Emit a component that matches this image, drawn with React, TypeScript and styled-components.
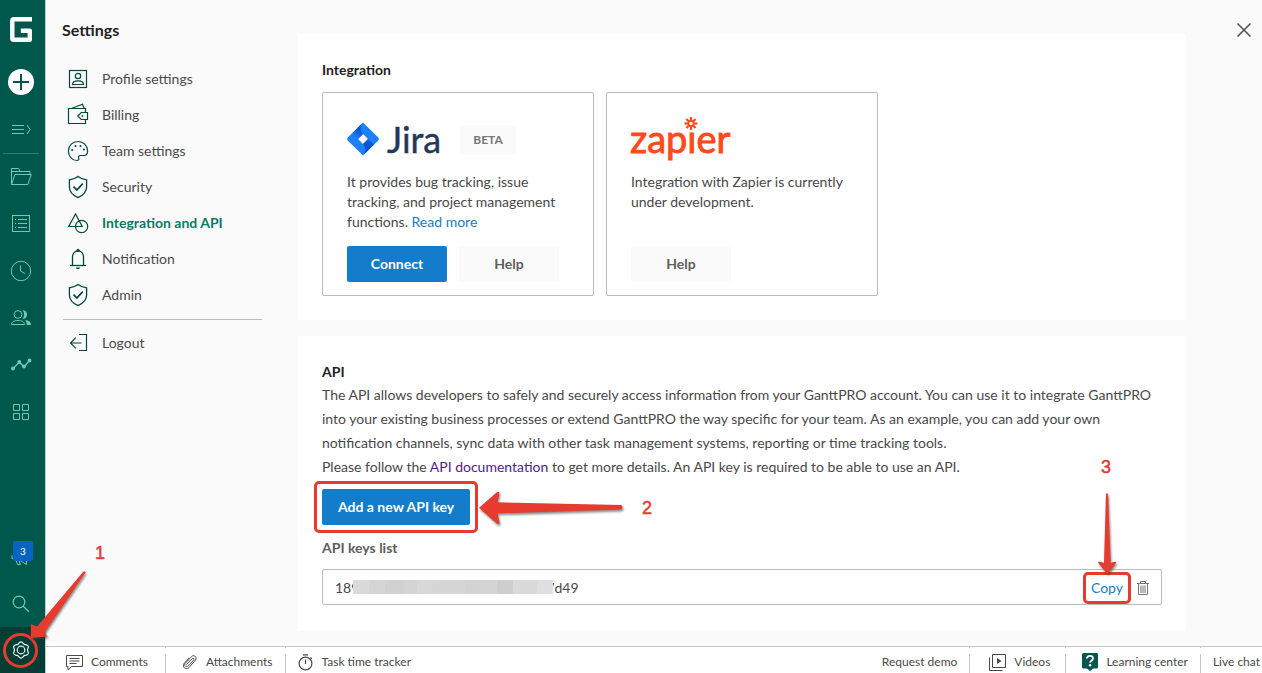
import React from "react";
import styled, { createGlobalStyle, css } from "styled-components";

const GlobalStyle = createGlobalStyle`
  *, *::before, *::after { box-sizing: border-box; }
  body {
    margin: 0;
    background: #fff;
    color: #484848;
    font-family: Lato, "Open Sans", sans-serif;
    font-size: 14px;
    line-height: 20px;
    overflow-x: hidden;
  }
  button { font: inherit; border: 0; padding: 0; margin: 0; cursor: pointer; background: none; color: inherit; }
  a { text-decoration: none; color: inherit; }
  h1, h2, h3, p, ul { margin: 0; padding: 0; }
  li { list-style: none; }
  svg { display: block; flex: none; overflow: visible; }
`;

const Page = styled.div`
  display: flex;
  min-height: 100vh;
`;

/* ---------- Left rail ---------- */

const Rail = styled.nav`
  display: flex;
  flex-direction: column;
  flex: none;
  width: 46px;
  padding: 6px 3px 0 0;
  background: #00574b;
  border-right: 1px solid #b9cfcb;
  color: #70c9b6;
`;

const RailItem = styled.button<{ $divided?: boolean; $first?: boolean }>`
  position: relative;
  display: flex;
  align-items: center;
  justify-content: center;
  flex: none;
  width: 42px;
  height: 47px;
  ${(p) => p.$first && css`margin: 5px 0 1px;`}
  ${(p) =>
    p.$divided &&
    css`
      &::before {
        content: "";
        position: absolute;
        top: 0;
        left: 3px;
        right: 3px;
        height: 1px;
        background: #35796f;
      }
    `}
`;

const RailLogo = styled.a`
  display: flex;
  align-items: center;
  justify-content: center;
  width: 42px;
  height: 47px;
  color: #fff;
`;

const RailSpacer = styled.div`
  flex: 1;
`;

const Badge = styled.span`
  position: absolute;
  top: 8px;
  left: 13px;
  width: 20px;
  height: 20px;
  border-radius: 2px;
  background: #0864c0;
  color: #fff;
  font-size: 10px;
  line-height: 20px;
  text-align: center;
`;

const ActiveRailItem = styled(RailItem)`
  width: 45px;
  height: 46px;
  padding-right: 3px;
  background: #033d34;
  color: #e8f5f2;
`;

/* ---------- Main area ---------- */

const Main = styled.div`
  display: flex;
  flex-direction: column;
  flex: 1;
  min-width: 0;
`;

const Content = styled.div`
  display: flex;
  flex: 1;
  background: #fafafa;
`;

const Menu = styled.nav`
  flex: none;
  width: 252px;
  padding: 18px 36px 0 16px;
`;

const MenuTitle = styled.h1`
  margin-bottom: 19px;
  color: #222;
  font-size: 16px;
  line-height: 24px;
  font-weight: 700;
`;

const MenuLink = styled.a<{ $active?: boolean }>`
  display: flex;
  align-items: center;
  gap: 12px;
  height: 36px;
  padding-left: 4px;
  color: ${(p) => (p.$active ? "#0a7a67" : "#4a4a4a")};
  font-weight: ${(p) => (p.$active ? 700 : 400)};
  svg { color: #00473d; }
`;

const MenuDivider = styled.hr`
  height: 1px;
  margin: 6px 0 5px 1px;
  border: 0;
  background: #bdbdbd;
`;

const Sections = styled.main`
  display: flex;
  flex-direction: column;
  gap: 16px;
  flex: 1;
  min-width: 0;
  padding: 34px 0 12px;
`;

const Aside = styled.div`
  flex: none;
  width: 76px;
  padding: 20px 8px 0 0;
  display: flex;
  justify-content: flex-end;
  align-items: flex-start;
`;

const CloseButton = styled.button`
  display: flex;
  align-items: center;
  justify-content: center;
  width: 20px;
  height: 20px;
  color: #555;
`;

const Section = styled.section`
  padding: 24px 24px;
  background: #fff;
`;

const ApiPanel = styled(Section)`
  padding-bottom: 26px;
`;

const SectionTitle = styled.h2`
  color: #222;
  font-size: 14px;
  line-height: 24px;
  font-weight: 700;
`;

const Cards = styled.div`
  display: flex;
  flex-wrap: wrap;
  gap: 12px;
  margin-top: 10px;
`;

const Card = styled.article`
  display: flex;
  flex-direction: column;
  width: 272px;
  height: 204px;
  padding: 24px 24px 13px;
  border: 1px solid #bcbcbc;
  border-radius: 2px;
`;

const Brand = styled.div`
  display: flex;
  align-items: center;
  height: 44px;
  margin-bottom: 11px;
`;

const JiraName = styled.span`
  margin-left: 8px;
  color: #253858;
  font-size: 36px;
  line-height: 44px;
  -webkit-text-stroke: 0.4px #253858;
`;

const Tag = styled.span`
  margin: 2px 53px 0 auto;
  width: 56px;
  height: 30px;
  background: #fafafa;
  color: #767676;
  font-size: 12px;
  line-height: 30px;
  font-weight: 700;
  text-align: center;
`;

const Description = styled.p`
  line-height: 20px;
`;

const TextLink = styled.a<{ $visited?: boolean }>`
  color: ${(p) => (p.$visited ? "#551a8b" : "#137dcb")};
`;

const Actions = styled.div`
  display: flex;
  gap: 12px;
  margin-top: auto;
`;

const Button = styled.button<{ $primary?: boolean; $fit?: boolean }>`
  ${(p) => (p.$fit ? css`padding: 0 16px;` : css`width: 100px;`)}
  height: 36px;
  border-radius: 2px;
  background: ${(p) => (p.$primary ? "#137dcb" : "#fafafa")};
  color: ${(p) => (p.$primary ? "#fff" : "#5e5e5e")};
  font-weight: 700;
`;

const ApiText = styled.div`
  margin-top: -1px;
  line-height: 24px;
`;

const ButtonRow = styled.div`
  display: flex;
  margin: 10px 0 11px;
`;

const Target = styled.div`
  position: relative;
  display: flex;
`;

const ListTitle = styled.h3`
  margin-bottom: 9px;
  color: #5e5e5e;
  font-size: 14px;
  line-height: 24px;
  font-weight: 700;
`;

const KeyRow = styled.li`
  display: flex;
  align-items: center;
  height: 36px;
  padding: 2px 12px 0;
  border: 1px solid #bcbcbc;
  border-radius: 2px;
`;

const KeyValue = styled.span`
  display: flex;
  align-items: center;
  margin-right: auto;
`;

const Redaction = styled.span`
  width: 200px;
  height: 14px;
  margin: 0 -7px 2px -6px;
  z-index: 1;
  background: linear-gradient(
    90deg,
    #dadada 0 16px, #d5d5d5 16px 32px, #d1d1d1 32px 50px, #d4d4d4 50px 64px,
    #d8d8d8 64px 80px, #d6d6d6 80px 112px, #d3d3d3 112px 128px, #d4d4d4 128px 144px,
    #cecece 144px 160px, #dadada 160px 184px, #dfdfdf 184px
  );
`;

const CopyButton = styled.button`
  color: #137dcb;
`;

const DeleteButton = styled.button`
  display: flex;
  margin-left: 14px;
  color: #757575;
`;

/* ---------- Callouts ---------- */

const Outline = styled.span<{ $x: number; $y: number }>`
  position: absolute;
  inset: ${(p) => `-${p.$y}px -${p.$x}px`};
  border: 3px solid #e63b2e;
  border-radius: 5px;
  pointer-events: none;
`;

const Ring = styled.span`
  position: absolute;
  top: 6px;
  left: 3px;
  width: 35px;
  height: 35px;
  border: 3px solid #e63b2e;
  border-radius: 50%;
`;

const Arrow = styled.svg<{ $left: number; $top: number }>`
  position: absolute;
  left: ${(p) => p.$left}px;
  top: ${(p) => p.$top}px;
  z-index: 3;
  pointer-events: none;
  filter: drop-shadow(1px 2px 1px rgba(60, 60, 60, 0.6));
`;

const Step = styled.span<{ $left: number; $top: number }>`
  position: absolute;
  left: ${(p) => p.$left}px;
  top: ${(p) => p.$top}px;
  width: 20px;
  color: #e63b2e;
  font-family: "Liberation Sans", Arial, sans-serif;
  font-size: 18px;
  line-height: 20px;
  font-weight: 400;
  -webkit-text-stroke: 0.5px #e63b2e;
  text-align: center;
`;

/* ---------- Footer ---------- */

const Footer = styled.footer`
  display: flex;
  justify-content: space-between;
  flex: none;
  height: 30px;
  padding-top: 3px;
  background: #fff;
  font-size: 12px;
`;

const FooterGroup = styled.div<{ $end?: boolean }>`
  display: flex;
  flex: ${(p) => (p.$end ? "0 0 auto" : "1 1 auto")};
  border-top: 1px solid #c6c6c6;
`;

const FooterLink = styled.a<{ $left: number; $right: number; $line?: boolean }>`
  display: flex;
  align-items: center;
  gap: 8px;
  padding: 4px ${(p) => p.$right}px 0 ${(p) => p.$left}px;
  white-space: nowrap;
  ${(p) =>
    p.$line &&
    css`
      background: linear-gradient(#c6c6c6 0 1px, transparent 1px 7px, #c6c6c6 7px) right top / 1px 100% no-repeat;
    `}
`;

/* ---------- Icons ---------- */

type IconProps = { size?: number; width?: number; children: React.ReactNode };

const Icon = ({ size = 24, width = 1, children }: IconProps) => (
  <svg
    width={size}
    height={size}
    viewBox={`0 0 ${size} ${size}`}
    fill="none"
    stroke="currentColor"
    strokeWidth={width}
    aria-hidden="true"
  >
    {children}
  </svg>
);

const ShieldIcon = () => (
  <Icon width={1.3}>
    <path d="M12 1.4c2.6 2 5.4 3 8.6 3.4v7.2c0 5-3.6 8.4-8.6 10.6-5-2.2-8.6-5.6-8.6-10.6V4.8C6.6 4.4 9.4 3.4 12 1.4z" />
    <path d="M7.5 11.6l3.3 3.4 6-6.4" strokeWidth="1.7" />
  </Icon>
);

const icons = {
  profile: (
    <Icon width={1.2}>
      <rect x="3.5" y="3.5" width="17" height="17" />
      <circle cx="12" cy="9" r="2.7" />
      <path d="M6.5 17.5c0-2.6 2.5-3.7 5.500-3.700s5.500 1.100 5.500 3.700z" />
    </Icon>
  ),
  billing: (
    <Icon width={1.2}>
      <path d="M19.5 9V5.5h-17v15h17V17" />
      <path d="M6 5.3l10.500-4 1.700 4" />
      <path d="M21.5 9.5h-6.200l-3.500 3.500 3.500 3.500h6.200z" />
      <circle cx="16.4" cy="13" r="0.7" fill="currentColor" strokeWidth="0.5" />
    </Icon>
  ),
  team: (
    <Icon width={1.2}>
      <path d="M12 2.5c-5.3 0-9.6 4-9.6 9.4 0 5.6 4.1 9.6 8.6 9.6 1.4 0 2.2-.8 1.7-2-.7-1.6.1-3 2-3h3c2.4 0 3.9-1.8 3.9-4.6 0-5.4-4.3-9.4-9.6-9.4z" />
      <g fill="currentColor" stroke="none">
        <circle cx="6.2" cy="11" r="1.05" />
        <circle cx="9.5" cy="7" r="1.05" />
        <circle cx="14.5" cy="7" r="1.05" />
        <circle cx="18" cy="10.5" r="1.05" />
      </g>
    </Icon>
  ),
  shield: <ShieldIcon />,
  integration: (
    <Icon width={1.2}>
      <path d="M9.5 3L2.7 15.500h13.500z" />
      <circle cx="15.6" cy="15.5" r="6.1" />
    </Icon>
  ),
  bell: (
    <Icon width={1.3}>
      <path d="M4 18.5h16" />
      <path d="M6.5 18.5V10c0-3.6 2.3-6 5.5-6s5.5 2.4 5.5 6v8.5" />
      <circle cx="12" cy="3.3" r="1.5" fill="currentColor" stroke="none" />
      <path d="M10 20.5h4a2 1.5 0 0 1-4 0z" fill="currentColor" stroke="none" />
    </Icon>
  ),
  logout: (
    <Icon width={1.2}>
      <path d="M13 3.5h7.5v16H13" />
      <path d="M15.5 12h-11M9.8 6.7L4.5 12l5.3 5.3" />
    </Icon>
  ),
};

const menuItems: { label: string; icon: keyof typeof icons; active?: boolean }[] = [
  { label: "Profile settings", icon: "profile" },
  { label: "Billing", icon: "billing" },
  { label: "Team settings", icon: "team" },
  { label: "Security", icon: "shield" },
  { label: "Integration and API", icon: "integration", active: true },
  { label: "Notification", icon: "bell" },
  { label: "Admin", icon: "shield" },
];

const gearPoints = () => {
  const pts: string[] = [];
  for (let i = 0; i <= 72; i++) {
    const a = (i / 72) * Math.PI * 2;
    const r = 7.3 + 0.8 * Math.cos(6 * (a - Math.PI / 6));
    pts.push(`${(12 + r * Math.cos(a)).toFixed(2)},${(12 + r * Math.sin(a)).toFixed(2)}`);
  }
  return pts.join(" ");
};

const JiraMark = () => (
  <svg width="32" height="34" viewBox="0 0 32 34" aria-hidden="true">
    <defs>
      <linearGradient id="jiraTop" x1="15" y1="9" x2="8" y2="17" gradientUnits="userSpaceOnUse">
        <stop offset="0" stopColor="#0052cc" />
        <stop offset="1" stopColor="#2684ff" />
      </linearGradient>
      <linearGradient id="jiraBottom" x1="17" y1="25" x2="25" y2="17" gradientUnits="userSpaceOnUse">
        <stop offset="0" stopColor="#0052cc" />
        <stop offset="0.8" stopColor="#0f5fd8" />
      </linearGradient>
    </defs>
    <path d="M16 0.500L31.300 15.600a2 2 0 0 1 0 2.800L16 33.500 0.700 18.400a2 2 0 0 1 0-2.800zM16 12l-5 5 5 5 5-5z" fill="#1f80ff" fillRule="evenodd" />
    <path d="M16 12c-3.200-3.200-3.200-8.200 0-11.500L5 11.500l6 5.500z" fill="url(#jiraTop)" />
    <path d="M21 17l-5 5c3.200 3.200 3.200 8.200 0 11.500l11-11z" fill="url(#jiraBottom)" />
  </svg>
);

const ZapierLogo = () => (
  <svg width="100" height="44" viewBox="0 0 100 44" role="img" aria-label="zapier">
    <text x="-1" y="36" fill="#ff4a1c" stroke="#ff4a1c" strokeWidth="0.9" fontFamily="Lato, sans-serif" fontSize="38">
      zapier
    </text>
    <rect x="53" y="0" width="14" height="15" fill="#fff" />
    <g stroke="#ff4a1c" strokeWidth="2.2">
      {[0, 45, 90, 135, 180, 225, 270, 315].map((deg) => (
        <path key={deg} d="M60 4.300V0" transform={`rotate(${deg} 60 6.500)`} />
      ))}
      <circle cx="60" cy="6.5" r="2.6" fill="#fff" strokeWidth="1.6" />
    </g>
  </svg>
);

const LeftRail = () => (
  <Rail aria-label="Workspace">
    <RailLogo href="#" aria-label="Home">
      <svg width="22" height="25" viewBox="0 0 22 25" fill="none" stroke="currentColor" strokeWidth="4.4" strokeLinejoin="round" aria-hidden="true">
        <path d="M22 2.300H3.500a1.200 1.200 0 0 0-1.200 1.200v18a1.200 1.200 0 0 0 1.200 1.200h16.300v-8.900h-9" />
      </svg>
    </RailLogo>
    <RailItem $first aria-label="Create">
      <svg width="26" height="26" viewBox="0 0 26 26" aria-hidden="true">
        <circle cx="13" cy="13" r="13" fill="#fff" />
        <path d="M13 5v16M5 13h16" stroke="#00574b" strokeWidth="2" />
      </svg>
    </RailItem>
    <RailItem aria-label="Expand menu">
      <Icon>
        <path d="M3 7.5h12M3 11.5h12M3 15.5h12M18 7l3 4.5-3 4.5" />
      </Icon>
    </RailItem>
    <RailItem $divided aria-label="Projects">
      <Icon>
        <path d="M2.5 19.500V3.500h7l2 3h9.500v3.500M2.500 19.500L6 9.500h16.300l-3.500 10z" />
        <path d="M3 6.5h8.500" />
      </Icon>
    </RailItem>
    <RailItem aria-label="Tasks">
      <Icon>
        <rect x="3.5" y="3.5" width="17" height="16" />
        <path d="M9 7.5h9M9 11.5h9M9 15.5h9M6 7.5h1M6 11.5h1M6 15.5h1" />
      </Icon>
    </RailItem>
    <RailItem aria-label="Time log">
      <Icon>
        <circle cx="12" cy="12" r="9.7" />
        <path d="M11.5 6.5V12l4.5 2.500" />
      </Icon>
    </RailItem>
    <RailItem aria-label="People">
      <Icon>
        <circle cx="9" cy="8.5" r="3.9" />
        <path d="M2.5 18.5c0-2.7 2.7-4 6.500-4s6.500 1.300 6.500 4z" />
        <path d="M13.5 4.200c6-1 6 9.600 0 8.600 2.200-2.400 2.200-6.200 0-8.600zM16 14.200c3.700 0 6 1.500 6 4.800h-4.300c0-2.300-.3-3.500-1.700-4.800z" fill="currentColor" stroke="none" />
      </Icon>
    </RailItem>
    <RailItem aria-label="Reports">
      <Icon width={1.3}>
        <path d="M4 15.500l6.500-6.500 4.500 5L20.500 7.500" />
        <g fill="currentColor" stroke="none">
          <circle cx="4" cy="15.5" r="1.9" />
          <circle cx="10.3" cy="9" r="1.9" />
          <circle cx="15" cy="13.5" r="1.9" />
          <circle cx="20.5" cy="7.5" r="1.9" />
        </g>
      </Icon>
    </RailItem>
    <RailItem aria-label="Apps">
      <Icon>
        <path d="M4.5 4.500h6v6h-6zM13.500 4.500h6v6h-6zM4.500 13.500h6v6h-6zM13.500 13.500h6v6h-6z" />
      </Icon>
    </RailItem>
    <RailSpacer />
    <RailItem aria-label="What's new">
      <Icon>
        <path d="M3 10.500v3l2.500.5M5.500 14l7 2.500 5 3v-5M7 15.500l1.500 4h3L10 16" />
      </Icon>
      <Badge>3</Badge>
    </RailItem>
    <RailItem aria-label="Search">
      <Icon width={1.2}>
        <circle cx="10" cy="10" r="5.8" />
        <path d="M14 14l6 5.800" />
      </Icon>
    </RailItem>
    <ActiveRailItem aria-label="Settings">
      <Icon width={1.2}>
        <polygon points={gearPoints()} />
        <circle cx="12" cy="12" r="3.8" />
      </Icon>
      <Ring />
      <Arrow $left={30} $top={-56} width="56" height="68" viewBox="0 0 56 68">
        <path d="M0.700 67L1 53l6 2.500L53 1q2-1.500 2.500.5L14.500 61.500l3 4z" fill="#e63b2e" />
      </Arrow>
      <Step $left={90} $top={-84}>1</Step>
    </ActiveRailItem>
  </Rail>
);

const SettingsMenu = () => (
  <Menu aria-label="Settings">
    <MenuTitle>Settings</MenuTitle>
    {menuItems.map((item) => (
      <MenuLink key={item.label} href="#" $active={item.active}>
        {icons[item.icon]}
        {item.label}
      </MenuLink>
    ))}
    <MenuDivider />
    <MenuLink href="#">
      {icons.logout}
      Logout
    </MenuLink>
  </Menu>
);

const IntegrationSection = () => (
  <Section>
    <SectionTitle>Integration</SectionTitle>
    <Cards>
      <Card>
        <Brand>
          <JiraMark />
          <JiraName>Jira</JiraName>
          <Tag>BETA</Tag>
        </Brand>
        <Description>
          It provides bug tracking, issue tracking, and project management functions.{" "}
          <TextLink href="#">Read more</TextLink>
        </Description>
        <Actions>
          <Button $primary>Connect</Button>
          <Button>Help</Button>
        </Actions>
      </Card>
      <Card>
        <Brand>
          <ZapierLogo />
        </Brand>
        <Description>Integration with Zapier is currently under development.</Description>
        <Actions>
          <Button>Help</Button>
        </Actions>
      </Card>
    </Cards>
  </Section>
);

const ApiSection = () => (
  <ApiPanel>
    <SectionTitle>API</SectionTitle>
    <ApiText>
      <p>
        The API allows developers to safely and securely access information from your GanttPRO account. You can use
        it to integrate GanttPRO into your existing business processes or extend GanttPRO the way specific for your
        team. As an example, you can add your own notification channels, sync data with other task management
        systems, reporting or time tracking tools.
      </p>
      <p>
        Please follow the{" "}
        <TextLink href="#" $visited>
          API documentation
        </TextLink>{" "}
        to get more details. An API key is required to be able to use an API.
      </p>
    </ApiText>
    <ButtonRow>
      <Target>
        <Button $primary $fit>
          Add a new API key
        </Button>
        <Outline $x={8} $y={8} />
        <Arrow $left={157} $top={2} width="145" height="34" viewBox="0 0 145 34">
          <path d="M0 16.700L17.500 1.500q3-2 3 1L18.500 11.300 142 14q3 2 0 4.500L18.500 22.300l2 9q0 3-3 1z" fill="#e63b2e" />
        </Arrow>
        <Step $left={315} $top={9}>2</Step>
      </Target>
    </ButtonRow>
    <ListTitle>API keys list</ListTitle>
    <ul>
      <KeyRow>
        <KeyValue>
          <span>189</span>
          <Redaction />
          <span>7d49</span>
        </KeyValue>
        <Target>
          <CopyButton>Copy</CopyButton>
          <Outline $x={8} $y={6} />
          <Arrow $left={7} $top={-85} width="19" height="82" viewBox="0 0 19 82">
            <path d="M9.300 81L0 69.500q0-1.500 6 .5L8 1q1-1.500 2 0l2.700 69q6-2 5.700-.5z" fill="#e63b2e" />
          </Arrow>
          <Step $left={5} $top={-121}>3</Step>
        </Target>
        <DeleteButton aria-label="Delete key">
          <svg width="12" height="14" viewBox="0 0 12 14" fill="none" stroke="currentColor" aria-hidden="true">
            <path d="M0 2.5h12M3.5 2V.5h5V2M1.5 3v10.5h9V3M4 4.5v7.5M6 4.5v7.5M8 4.5v7.5" />
          </svg>
        </DeleteButton>
      </KeyRow>
    </ul>
  </ApiPanel>
);

const BottomBar = () => (
  <Footer>
    <FooterGroup>
      <FooterLink href="#" $left={20} $right={18} $line>
        <svg width="17" height="17" viewBox="0 0 17 17" fill="none" stroke="currentColor" aria-hidden="true">
          <path d="M0.5 1.5h16v11h-11l-3.5 3.500v-3.500h-1.500zM3.500 4.500h10M3.500 7h10M3.500 9.500h7" />
        </svg>
        Comments
      </FooterLink>
      <FooterLink href="#" $left={16} $right={13} $line>
        <svg width="16" height="16" viewBox="0 0 16 16" fill="none" stroke="currentColor" strokeLinecap="round" aria-hidden="true">
          <path d="M4.5 10.500l5.700-5.800c1.200-1.200 2.600.3 1.500 1.500L6 12c-1.900 1.900-4.600-.6-2.800-2.600L9.500 2.600c2.500-2.500 6.200.9 3.900 3.500L7 13.500c-3 3.100-7.600-.7-4.800-4.200l4.600-5" />
        </svg>
        Attachments
      </FooterLink>
      <FooterLink href="#" $left={12} $right={12}>
        <svg width="16" height="17" viewBox="0 0 16 17" fill="none" stroke="currentColor" strokeWidth="1.2" aria-hidden="true">
          <circle cx="7.500" cy="9.5" r="6.4" />
          <path d="M5 0.800h5M7.500 5.500v4.500M12.500 3.500l1.300 1.300" />
        </svg>
        Task time tracker
      </FooterLink>
    </FooterGroup>
    <FooterGroup $end>
      <FooterLink href="#" $left={12} $right={13} $line>
        Request demo
      </FooterLink>
      <FooterLink href="#" $left={19} $right={16} $line>
        <svg width="17" height="17" viewBox="0 0 17 17" fill="none" stroke="currentColor" aria-hidden="true">
          <path d="M3.5 0.500h13v13h-13zM0.500 3.500v13h13" />
          <path d="M8 4v6l4.500-3z" fill="currentColor" stroke="none" />
        </svg>
        Videos
      </FooterLink>
      <FooterLink href="#" $left={16} $right={13} $line>
        <svg width="16" height="18" viewBox="0 0 16 18" aria-hidden="true">
          <path d="M1.5 0h13A1.500 1.500 0 0 1 16 1.500v12.500a1.500 1.500 0 0 1-1.500 1.500H11L8 18l-3-2.500H1.500A1.500 1.500 0 0 1 0 14V1.500A1.500 1.500 0 0 1 1.500 0z" fill="#00574b" />
          <path d="M5 5.600C5 3.800 6.200 2.900 8 2.900s3 1 3 2.500c0 2-2.800 2.100-2.800 4.300" fill="none" stroke="#fff" strokeWidth="1.8" />
          <circle cx="8.1" cy="12.3" r="1.2" fill="#fff" />
        </svg>
        Learning center
      </FooterLink>
      <FooterLink href="#" $left={12} $right={2}>
        Live chat
      </FooterLink>
    </FooterGroup>
  </Footer>
);

export default function App() {
  return (
    <>
      <GlobalStyle />
      <Page>
        <LeftRail />
        <Main>
          <Content>
            <SettingsMenu />
            <Sections>
              <IntegrationSection />
              <ApiSection />
            </Sections>
            <Aside>
              <CloseButton aria-label="Close">
                <svg width="14" height="14" viewBox="0 0 14 14" fill="none" stroke="currentColor" strokeWidth="1.6" aria-hidden="true">
                  <path d="M0.5 0.500l13 13M13.500 0.500l-13 13" />
                </svg>
              </CloseButton>
            </Aside>
          </Content>
          <BottomBar />
        </Main>
      </Page>
    </>
  );
}
